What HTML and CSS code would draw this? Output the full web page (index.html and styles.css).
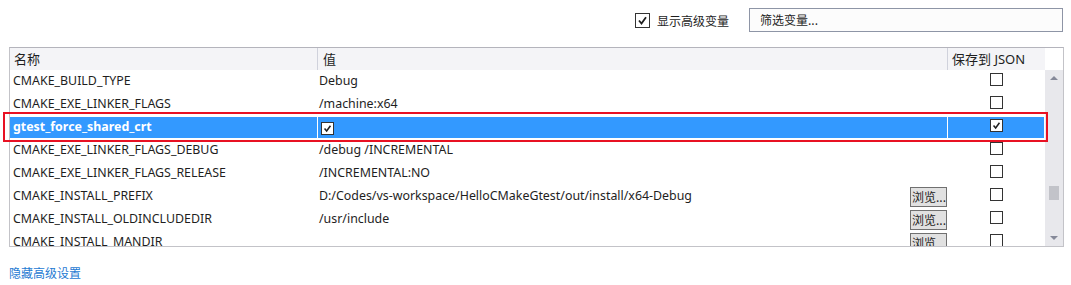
FILE: index.html
```html
<!DOCTYPE html>
<html>
<head>
<meta charset="utf-8">
<link rel="stylesheet" href="styles.css">
</head>
<body>
<div class="topbar">
  <label class="adv">
    <span class="cb checked"><svg viewBox="0 0 13 13"><path d="M3 6.5 L5.5 9.5 L10 3.2" fill="none" stroke="#1e1e1e" stroke-width="1.8"/></svg></span>
    <span class="adv-text">显示高级变量</span>
  </label>
  <div class="filter">筛选变量...</div>
</div>

<div class="grid-wrap">
  <div class="main">
    <div class="head">
      <div class="hc c-name">名称</div>
      <div class="hsep"></div>
      <div class="hc c-val">值</div>
      <div class="hsep"></div>
      <div class="hc h-json">保存到 JSON</div>
    </div>
    <div class="body">
      <div class="row">
        <div class="c c-name">CMAKE_BUILD_TYPE</div><div class="sep"></div>
        <div class="c c-val">Debug</div><div class="sep"></div>
        <div class="c c-json"><span class="cb"></span></div>
      </div>
      <div class="row">
        <div class="c c-name">CMAKE_EXE_LINKER_FLAGS</div><div class="sep"></div>
        <div class="c c-val">/machine:x64</div><div class="sep"></div>
        <div class="c c-json"><span class="cb"></span></div>
      </div>
      <div class="row sel">
        <div class="c c-name">gtest_force_shared_crt</div><div class="sep"></div>
        <div class="c c-val"><span class="cb checked"><svg viewBox="0 0 13 13"><path d="M3 6.5 L5.5 9.5 L10 3.2" fill="none" stroke="#1e1e1e" stroke-width="1.8"/></svg></span></div><div class="sep"></div>
        <div class="c c-json"><span class="cb checked"><svg viewBox="0 0 13 13"><path d="M3 6.5 L5.5 9.5 L10 3.2" fill="none" stroke="#1e1e1e" stroke-width="1.8"/></svg></span></div>
      </div>
      <div class="row">
        <div class="c c-name">CMAKE_EXE_LINKER_FLAGS_DEBUG</div><div class="sep"></div>
        <div class="c c-val">/debug /INCREMENTAL</div><div class="sep"></div>
        <div class="c c-json"><span class="cb"></span></div>
      </div>
      <div class="row">
        <div class="c c-name">CMAKE_EXE_LINKER_FLAGS_RELEASE</div><div class="sep"></div>
        <div class="c c-val">/INCREMENTAL:NO</div><div class="sep"></div>
        <div class="c c-json"><span class="cb"></span></div>
      </div>
      <div class="row">
        <div class="c c-name">CMAKE_INSTALL_PREFIX</div><div class="sep"></div>
        <div class="c c-val"><span>D:/Codes/vs-workspace/HelloCMakeGtest/out/install/x64-Debug</span><span class="browse">浏览...</span></div><div class="sep"></div>
        <div class="c c-json"><span class="cb"></span></div>
      </div>
      <div class="row">
        <div class="c c-name">CMAKE_INSTALL_OLDINCLUDEDIR</div><div class="sep"></div>
        <div class="c c-val"><span>/usr/include</span><span class="browse">浏览...</span></div><div class="sep"></div>
        <div class="c c-json"><span class="cb"></span></div>
      </div>
      <div class="row">
        <div class="c c-name">CMAKE_INSTALL_MANDIR</div><div class="sep"></div>
        <div class="c c-val"><span></span><span class="browse">浏览...</span></div><div class="sep"></div>
        <div class="c c-json"><span class="cb"></span></div>
      </div>
    </div>
  </div>
  <div class="scroll">
    <div class="scroll-top"></div>
    <div class="track">
      <div class="arrow up"></div>
      <div class="thumb"></div>
      <div class="arrow down"></div>
    </div>
  </div>
  <div class="mark"></div>
</div>

<a class="link" href="#">隐藏高级设置</a>
</body>
</html>
```

FILE: styles.css
```css
* { box-sizing: border-box; }
body {
  margin: 0;
  background: #fff;
  font-family: "Noto Sans", "Noto Sans CJK SC", sans-serif;
  font-size: 12.4px;
  color: #1e1e1e;
}
.topbar {
  display: flex;
  justify-content: flex-end;
  align-items: flex-start;
  padding: 8px 8px 0 0;
  height: 47px;
}
.adv {
  display: flex;
  align-items: center;
  height: 24px;
  margin-right: 20px;
}
.adv .cb { width: 15px; height: 15px; }
.adv-text {
  margin-left: 7px;
  font-family: "Noto Sans CJK SC", sans-serif;
  font-size: 12px;
}
.filter {
  width: 314px;
  height: 24px;
  border: 1px solid #8e95a6;
  background: #fcfcfc;
  padding-left: 10px;
  line-height: 22px;
  font-family: "Noto Sans CJK SC", sans-serif;
  font-size: 12px;
}
.cb {
  display: inline-block;
  width: 13px;
  height: 13px;
  border: 1px solid #333;
  background: #fff;
  vertical-align: middle;
}
.cb svg { display: block; width: 100%; height: 100%; }

.grid-wrap {
  position: relative;
  margin-left: 9px;
  width: 1055px;
  height: 200px;
  border: 1px solid #c3c3c8;
  border-top: 1px solid #b4b4bc;
  display: flex;
}
.main {
  width: 1035px;
  display: flex;
  flex-direction: column;
  overflow: hidden;
}
.head {
  display: flex;
  height: 22px;
  background: #f4f4f7;
  flex: none;
}
.hc {
  line-height: 22px;
  padding-left: 4px;
  color: #1e1e1e;
  font-size: 13px;
  font-family: "Noto Sans", "Noto Sans CJK SC", sans-serif;
  white-space: nowrap;
}
.hsep { width: 1px; background: #d0d2dc; }
.c-name { width: 307px; }
.c-val { width: 629px; }
.c-json { width: 96px; }
.head .c-val { padding-left: 5px; }
.h-json { width: 96px; padding-left: 4px; }
.body { flex: 1; overflow: hidden; }
.row {
  display: flex;
  height: 23px;
  padding: 1px 0;
}
.c {
  line-height: 20px;
  white-space: nowrap;
  overflow: hidden;
}
.row .c-name { padding-left: 3px; }
.row .c-val {
  padding-left: 1px;
  display: flex;
  justify-content: space-between;
  align-items: flex-start;
}
.row .c-val .cb { margin: 5px 0 0 2px; }
.sep { width: 1px; }
.c-json {
  display: flex;
  justify-content: center;
  align-items: flex-start;
}
.c-json .cb { margin-top: 2px; }
.sel .c { background: #3399ff; color: #fff; }
.sel .c-name { font-weight: bold; }
.browse {
  display: inline-block;
  width: 37px;
  height: 20px;
  border: 1px solid #707070;
  background: #e1e1e1;
  font-family: "Noto Sans CJK SC", sans-serif;
  font-size: 12px;
  line-height: 18px;
  padding-left: 1px;
  color: #1e1e1e;
  margin-top: 1px;
}
.scroll {
  width: 18px;
  display: flex;
  flex-direction: column;
}
.scroll-top { height: 22px; background: #fff; flex: none; }
.track {
  flex: 1;
  background: #e8e8ec;
  position: relative;
}
.arrow {
  position: absolute;
  left: 5px;
  width: 0;
  height: 0;
  border-left: 4px solid transparent;
  border-right: 4px solid transparent;
}
.arrow.up { top: 6px; border-bottom: 4px solid #868999; }
.arrow.down { bottom: 6px; border-top: 4px solid #868999; }
.thumb {
  position: absolute;
  left: 4px;
  top: 116px;
  width: 10px;
  height: 14px;
  background: #c2c3c9;
}
.mark {
  position: absolute;
  left: -7px;
  top: 64px;
  width: 1045px;
  height: 30px;
  border: 2px solid #e81123;
  pointer-events: none;
}
.link {
  display: inline-block;
  margin: 17px 0 0 9px;
  color: #1e7ad2;
  text-decoration: none;
  font-family: "Noto Sans CJK SC", sans-serif;
  font-size: 12px;
}
```
